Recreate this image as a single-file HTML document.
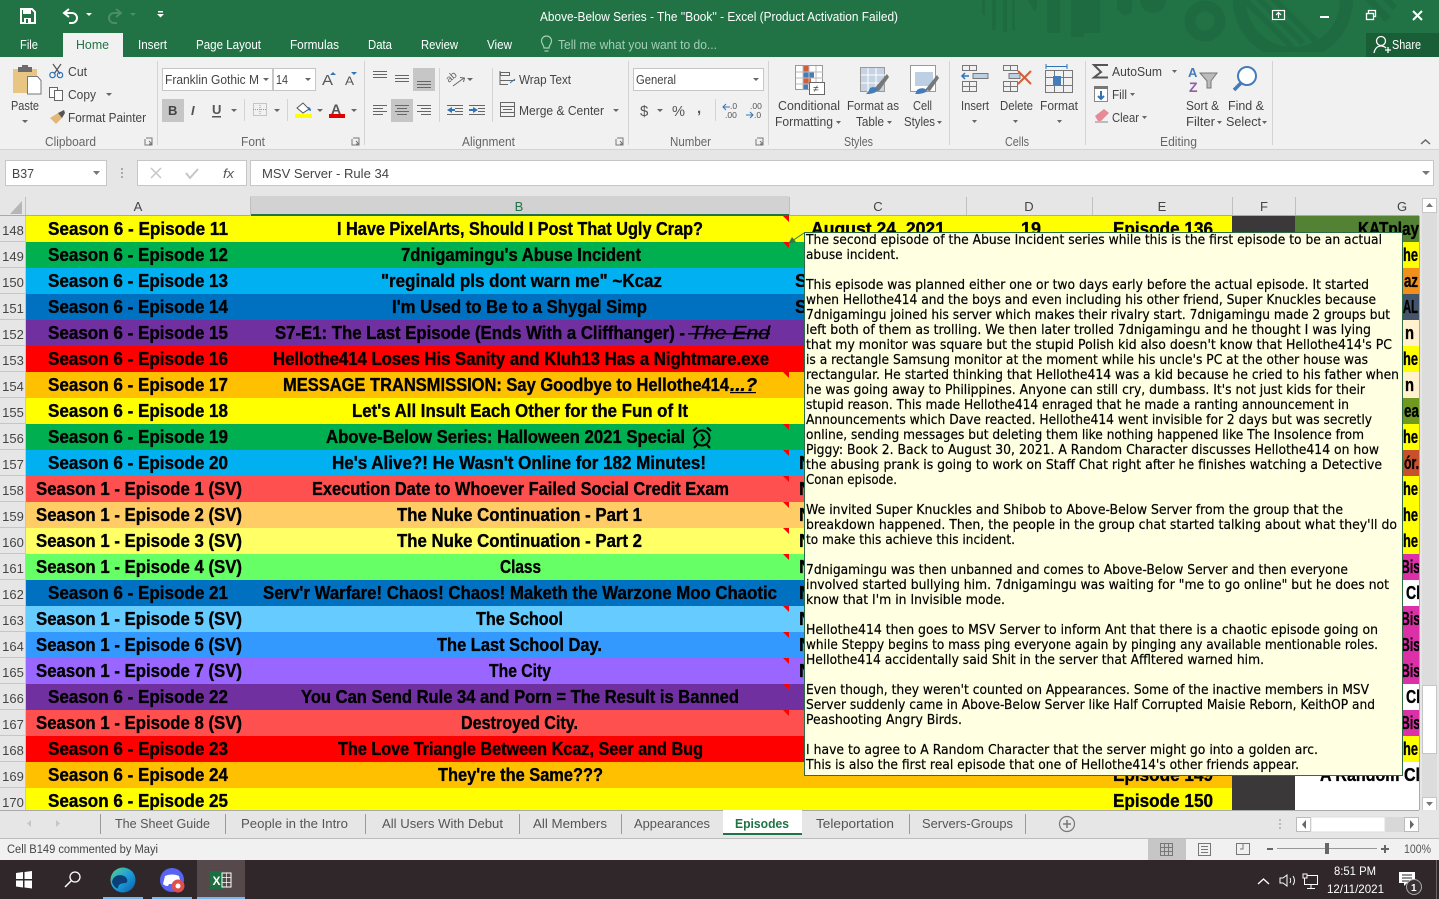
<!DOCTYPE html>
<html><head><meta charset="utf-8"><title>Above-Below Series - Excel</title>
<style>
html,body{margin:0;padding:0;background:#f1f1f1;overflow:hidden}
svg{display:block;position:absolute;left:0;top:0}
text{font-family:"Liberation Sans",sans-serif;white-space:pre}
.r{font-size:12.5px;fill:#444}
.g{font-size:12px;fill:#666}
.t{font-size:12.5px;fill:#fff}
.h{font-size:13px;fill:#444;text-anchor:middle}
.s{font-size:18px;font-weight:bold;fill:#000;stroke:#000;stroke-width:.35}
.c{font-family:"DejaVu Sans",sans-serif;font-size:13px;fill:#000;stroke:#000;stroke-width:.2}
.k{font-size:12.5px;fill:#666}
.w{fill:#fff;font-size:12.5px}
</style></head><body>
<svg width="1439" height="899" viewBox="0 0 1439 899" xmlns="http://www.w3.org/2000/svg">
<defs>
<clipPath id="grid"><rect x="26" y="216" width="1393" height="594"/></clipPath>
<clipPath id="tb"><rect x="0" y="0" width="1439" height="57"/></clipPath>
<clipPath id="ringc"><rect x="1220" y="0" width="150" height="52"/></clipPath>
<clipPath id="innerc"><circle cx="1293" cy="0" r="50"/></clipPath>
<linearGradient id="edge" x1="0" y1="0" x2="1" y2="1"><stop offset="0" stop-color="#5fd08a"/><stop offset=".5" stop-color="#1c9fd8"/><stop offset="1" stop-color="#0c5aa8"/></linearGradient>
</defs>

<!-- title bar -->
<rect width="1439" height="57" fill="#217346"/>
<g clip-path="url(#tb)" fill="#1f6b41">
<rect x="982" y="0" width="3" height="15"/><rect x="992" y="0" width="4" height="30"/><rect x="1003" y="0" width="4" height="32"/><rect x="1012" y="0" width="3" height="30"/>
<path d="M1028 0h9v8l-3 4z"/><rect x="1047" y="0" width="13" height="33"/><rect x="1071" y="0" width="13" height="37"/><rect x="1084" y="0" width="16" height="33"/><path d="M1117 0h15v12l-7 4-8-6z"/>
<circle cx="1153" cy="0" r="13"/>
<circle cx="1205" cy="21" r="15" fill="none" stroke="#1f6b41" stroke-width="11"/>
<g clip-path="url(#ringc)"><circle cx="1293" cy="0" r="53.500" fill="none" stroke="#1f6b41" stroke-width="13"/>
<g clip-path="url(#innerc)" stroke="#1f6b41" stroke-width="6" fill="none"><path d="M1240 -5l52 52M1255 -5l48 48M1270 -5l46 46"/></g></g>
<path d="M1365 0l20 22 6-5-16-17zM1383 0l10 10 4-4-6-6z"/>
</g>
<rect x="1366" y="33" width="73" height="24" fill="#1a5e38"/>
<text class="t" x="540" y="21" textLength="358" lengthAdjust="spacingAndGlyphs">Above-Below Series - The ''Book'' - Excel (Product Activation Failed)</text>

<!-- QAT -->
<g fill="none" stroke="#fff" stroke-width="2">
<path d="M21 9h11l3 3v11H21z"/></g>
<rect x="23" y="9" width="8" height="5" fill="#fff"/><rect x="24" y="18" width="7" height="5" fill="#fff"/><rect x="26" y="19" width="2" height="4" fill="#217346"/>
<path d="M65 13h7a5 5 0 0 1 0 10h-3M69 9l-5 4 5 4" fill="none" stroke="#fff" stroke-width="2"/>
<path d="M86 13h6l-3 3z" fill="#fff"/>
<path d="M120 13h-6a5 5 0 0 0 0 10h3M116 9l5 4-5 4" fill="none" stroke="#4c8d69" stroke-width="2"/>
<path d="M130 13h6l-3 3z" fill="#4c8d69"/>
<rect x="158" y="11" width="5" height="1.500" fill="#fff"/><path d="M157 14h7l-3.500 3.500z" fill="#fff"/>

<!-- window controls -->
<g fill="none" stroke="#fff" stroke-width="1.200"><rect x="1272.500" y="10.500" width="12" height="9"/><path d="M1278.500 18v-5M1276 15l2.500-2.500 2.500 2.500"/></g>
<rect x="1320" y="16" width="9" height="2" fill="#fff"/>
<g fill="none" stroke="#fff" stroke-width="1.300"><rect x="1366.500" y="13.500" width="7" height="6"/><path d="M1368.500 13v-2.500h7v6h-2"/></g>
<path d="M1413 11l9 9M1422 11l-9 9" stroke="#fff" stroke-width="2" fill="none"/>

<!-- tabs -->
<text class="w" x="20" y="49" textLength="18" lengthAdjust="spacingAndGlyphs">File</text>
<rect x="63" y="33" width="60" height="25" fill="#f1f1f1"/>
<text x="76" y="49" font-size="12.500" fill="#217346" textLength="33" lengthAdjust="spacingAndGlyphs">Home</text>
<text class="w" x="138" y="49" textLength="29" lengthAdjust="spacingAndGlyphs">Insert</text>
<text class="w" x="196" y="49" textLength="65" lengthAdjust="spacingAndGlyphs">Page Layout</text>
<text class="w" x="290" y="49" textLength="49" lengthAdjust="spacingAndGlyphs">Formulas</text>
<text class="w" x="368" y="49" textLength="24" lengthAdjust="spacingAndGlyphs">Data</text>
<text class="w" x="421" y="49" textLength="37" lengthAdjust="spacingAndGlyphs">Review</text>
<text class="w" x="487" y="49" textLength="25" lengthAdjust="spacingAndGlyphs">View</text>
<text x="558" y="49" font-size="12.500" fill="#a4cdb6" textLength="159" lengthAdjust="spacingAndGlyphs">Tell me what you want to do...</text>
<path d="M544 48c0-3-2.500-4-2.500-7a5 5 0 0 1 10 0c0 3-2.500 4-2.500 7zM544.500 51h4" fill="none" stroke="#a4cdb6" stroke-width="1.200"/>
<circle cx="1381" cy="41" r="4.500" fill="none" stroke="#fff" stroke-width="1.300"/><path d="M1374 53c1-5 4-7 7-7 2 0 4 1 5 2M1385 50h6M1388 47v6" fill="none" stroke="#fff" stroke-width="1.300"/>
<text class="w" x="1392" y="49" textLength="29" lengthAdjust="spacingAndGlyphs">Share</text>

<!-- ribbon -->
<rect y="57" width="1439" height="92" fill="#f1f1f1"/>
<rect y="149" width="1439" height="1" fill="#d4d4d4"/>
<g fill="#d4d4d4">
<rect x="157" y="61" width="1" height="84"/><rect x="364" y="61" width="1" height="84"/><rect x="628" y="61" width="1" height="84"/><rect x="768" y="61" width="1" height="84"/><rect x="949" y="61" width="1" height="84"/><rect x="1085" y="61" width="1" height="84"/><rect x="1272" y="61" width="1" height="84"/>
<rect x="244" y="99" width="1" height="22"/><rect x="287" y="99" width="1" height="22"/><rect x="439" y="68" width="1" height="54"/><rect x="492" y="68" width="1" height="54"/><rect x="715" y="99" width="1" height="22"/>
</g>
<!-- clipboard -->
<path d="M13 69h24v24H13z" fill="#e9c583"/><rect x="18" y="67" width="14" height="5" fill="#6b6b6b"/><rect x="22" y="65" width="6" height="3" fill="#6b6b6b"/>
<path d="M27.500 76.500h10l3.500 4v13.500H27.500z" fill="#fff" stroke="#777"/>
<text class="r" x="11" y="110" textLength="28" lengthAdjust="spacingAndGlyphs">Paste</text><path d="M22 120h6l-3 3z" fill="#666"/>
<g fill="none" stroke="#555" stroke-width="1.200"><path d="M53 64l7 10M61 64l-7 10"/></g><circle cx="52.500" cy="75" r="2.700" fill="none" stroke="#2f74b5" stroke-width="1.200"/><circle cx="60" cy="75" r="2.700" fill="none" stroke="#2f74b5" stroke-width="1.200"/>
<text class="r" x="68" y="76" textLength="19" lengthAdjust="spacingAndGlyphs">Cut</text>
<g fill="#fff" stroke="#666"><rect x="49.500" y="87.500" width="8" height="10"/><rect x="54.500" y="90.500" width="8" height="10"/></g>
<text class="r" x="68" y="99" textLength="28" lengthAdjust="spacingAndGlyphs">Copy</text><path d="M106 93h6l-3 3z" fill="#666"/>
<path d="M50 118l8-5 4 5-6 6z" fill="#e1b877"/><path d="M58 113l6-3 1 3-3 5z" fill="#555"/>
<text class="r" x="68" y="122" textLength="78" lengthAdjust="spacingAndGlyphs">Format Painter</text>
<text class="k" x="45" y="146" textLength="51" lengthAdjust="spacingAndGlyphs">Clipboard</text>
<path d="M146 138h6v7h-7v-6M149 141l3 3M149 144h3v-3" fill="none" stroke="#777"/>
<!-- font -->
<rect x="162.500" y="68.500" width="110" height="22" fill="#fff" stroke="#c6c6c6"/><rect x="273.500" y="68.500" width="42" height="22" fill="#fff" stroke="#c6c6c6"/>
<text x="165" y="84" font-size="12.500" fill="#444" textLength="94" lengthAdjust="spacingAndGlyphs">Franklin Gothic M</text><path d="M263 78h6l-3 3z" fill="#666"/>
<text x="276" y="84" font-size="12.500" fill="#444" textLength="12" lengthAdjust="spacingAndGlyphs">14</text><path d="M305 78h6l-3 3z" fill="#666"/>
<text x="322" y="85" font-size="15" fill="#555" textLength="11" lengthAdjust="spacingAndGlyphs">A</text><path d="M330 75l3-3 3 3z" fill="#2f74b5"/>
<text x="345" y="85" font-size="12" fill="#555" textLength="9" lengthAdjust="spacingAndGlyphs">A</text><path d="M351 72h6l-3 3z" fill="#2f74b5"/>
<rect x="162" y="99" width="22" height="23" fill="#c6c6c6"/>
<text x="168" y="115" font-size="13" font-weight="bold" fill="#444">B</text>
<text x="191" y="115" font-size="13" font-style="italic" font-weight="bold" fill="#555" font-family="Liberation Serif">I</text>
<text x="212" y="114" font-size="13" font-weight="bold" fill="#555">U</text><rect x="212" y="116" width="9" height="1.500" fill="#555"/>
<path d="M231 109h6l-3 3z" fill="#666"/>
<g fill="none" stroke="#999" stroke-dasharray="1 1"><rect x="253.500" y="103.500" width="13" height="12"/><path d="M253 109.500h14M260 103v12"/></g>
<path d="M274 109h6l-3 3z" fill="#666"/>
<path d="M297 108l6-5 6 6-6 4z" fill="#fff" stroke="#555"/><path d="M308 107c2 0 3 2 3 4l-3-1z" fill="#2f74b5"/><rect x="295" y="114" width="17" height="4" fill="#ff0"/>
<path d="M317 109h6l-3 3z" fill="#666"/>
<text x="331" y="114" font-size="14" fill="#555" font-weight="bold">A</text><rect x="329" y="114" width="16" height="4" fill="#e00000"/>
<path d="M351 109h6l-3 3z" fill="#666"/>
<text class="k" x="241" y="146" textLength="24" lengthAdjust="spacingAndGlyphs">Font</text>
<path d="M353 138h6v7h-7v-6M356 141l3 3M356 144h3v-3" fill="none" stroke="#777"/>
<!-- alignment -->
<rect x="413" y="68" width="22" height="23" fill="#c6c6c6"/><rect x="391" y="99" width="22" height="23" fill="#c6c6c6"/>
<g stroke="#666" fill="none">
<path d="M373 71.500h14M373 74.500h14M373 77.500h14"/>
<path d="M395 75.500h14M395 78.500h14M395 81.500h14"/>
<path d="M417 81.500h14M417 84.500h14M417 87.500h14"/>
<path d="M373 105.500h14M373 108.500h10M373 111.500h14M373 114.500h10"/>
<path d="M395 105.500h14M397 108.500h10M395 111.500h14M397 114.500h10"/>
<path d="M417 105.500h14M421 108.500h10M417 111.500h14M421 114.500h10"/>
<path d="M453 86l11-8M460 77.500l4.500.5-1 4"/>
<path d="M447 105.500h16M455 108.500h8M455 111.500h8M447 114.500h16"/>
<path d="M469 105.500h16M478 108.500h7M478 111.500h7M469 114.500h16"/>
</g>
<text x="449" y="83" font-size="10" fill="#666" transform="rotate(-40 449 83)">ab</text>
<path d="M467 78h6l-3 3z" fill="#666"/>
<path d="M447 110l5-3v6z" fill="#2f74b5"/><rect x="451" y="109" width="4" height="2" fill="#2f74b5"/>
<path d="M478 110l-5-3v6z" fill="#2f74b5"/><rect x="469" y="109" width="5" height="2" fill="#2f74b5"/>
<g stroke="#666" fill="none">
<rect x="500.500" y="72.500" width="9" height="3"/><path d="M500 80.500h15M500 84.500h8M500 71v14"/>
<rect x="500.500" y="102.500" width="14" height="14"/><path d="M500 106.500h15M500 112.500h15M503 109.500h9"/></g>
<path d="M510 83l5-4" stroke="#2f74b5" fill="none"/>
<text class="r" x="519" y="84" textLength="52" lengthAdjust="spacingAndGlyphs">Wrap Text</text>
<text class="r" x="519" y="115" textLength="85" lengthAdjust="spacingAndGlyphs">Merge &amp; Center</text><path d="M613 109h6l-3 3z" fill="#666"/>
<text class="k" x="462" y="146" textLength="53" lengthAdjust="spacingAndGlyphs">Alignment</text>
<path d="M617 138h6v7h-7v-6M620 141l3 3M620 144h3v-3" fill="none" stroke="#777"/>
<!-- number -->
<rect x="633.500" y="68.500" width="130" height="22" fill="#fff" stroke="#c6c6c6"/>
<text x="636" y="84" font-size="12.500" fill="#444" textLength="40" lengthAdjust="spacingAndGlyphs">General</text><path d="M753 78h6l-3 3z" fill="#666"/>
<text x="640" y="116" font-size="15" fill="#555">$</text><path d="M657 109h6l-3 3z" fill="#666"/>
<text x="672" y="116" font-size="15" fill="#555" textLength="13" lengthAdjust="spacingAndGlyphs">%</text>
<text x="697" y="113" font-size="15" font-weight="bold" fill="#555">,</text>
<text x="730" y="109" font-size="8.500" fill="#555">.0</text><text x="725" y="118" font-size="8.500" fill="#555">.00</text>
<path d="M723 107h7M726 104l-3 3 3 3" stroke="#2f74b5" fill="none"/>
<text x="750" y="109" font-size="8.500" fill="#555">.00</text><text x="754" y="118" font-size="8.500" fill="#555">.0</text>
<path d="M746 115h7M750 112l3 3-3 3" stroke="#2f74b5" fill="none"/>
<text class="k" x="670" y="146" textLength="41" lengthAdjust="spacingAndGlyphs">Number</text>
<path d="M757 138h6v7h-7v-6M760 141l3 3M760 144h3v-3" fill="none" stroke="#777"/>
<!-- styles -->
<g fill="#fff" stroke="#999"><rect x="795.500" y="65.500" width="27" height="24"/></g>
<rect x="803" y="66" width="6" height="6" fill="#d15f3c"/><rect x="803" y="72" width="11" height="6" fill="#447cb8"/><rect x="803" y="78" width="8" height="6" fill="#d15f3c"/><rect x="803" y="84" width="5" height="5" fill="#447cb8"/>
<path d="M796 72h27M796 78h27M796 84h27M803 66v24M809 66v24M816 66v24" stroke="#bbb" fill="none"/>
<rect x="809.500" y="82.500" width="15" height="12" fill="#fff" stroke="#666"/><text x="813" y="92" font-size="10" fill="#444">≠</text>
<text class="r" x="778" y="110" textLength="62" lengthAdjust="spacingAndGlyphs">Conditional</text>
<text class="r" x="775" y="126" textLength="58" lengthAdjust="spacingAndGlyphs">Formatting</text><path d="M836 121h5l-2.500 3z" fill="#666"/>
<rect x="860.500" y="67.500" width="24" height="24" fill="#c6d3e3" stroke="#999"/><path d="M861 75h24M861 83h24M868 68v24M876 68v24" stroke="#fff"/>
<path d="M873 90l14-16 2 3-10 14z" fill="#777"/><path d="M870 88c4-2 7 0 8 2-3 4-9 4-12 4 2-2 3-3 4-6z" fill="#447cb8"/>
<text class="r" x="847" y="110" textLength="52" lengthAdjust="spacingAndGlyphs">Format as</text>
<text class="r" x="856" y="126" textLength="28" lengthAdjust="spacingAndGlyphs">Table</text><path d="M887 121h5l-2.500 3z" fill="#666"/>
<rect x="910.500" y="65.500" width="25" height="26" fill="#fff" stroke="#999"/><rect x="915" y="72" width="18" height="14" fill="#bccfe3"/>
<path d="M925 90l12-15 2 3-9 13z" fill="#777"/><path d="M917 90c4-3 9-2 10 1-3 3-9 3-12 3 1-1 1-2 2-4z" fill="#447cb8"/>
<text class="r" x="913" y="110" textLength="19" lengthAdjust="spacingAndGlyphs">Cell</text>
<text class="r" x="904" y="126" textLength="31" lengthAdjust="spacingAndGlyphs">Styles</text><path d="M937 121h5l-2.500 3z" fill="#666"/>
<text class="k" x="844" y="146" textLength="29" lengthAdjust="spacingAndGlyphs">Styles</text>
<!-- cells -->
<g fill="none" stroke="#777">
<path d="M962.500 65.500h14v5h-14zM969.500 65v5"/><path d="M962.500 81.500h14v10h-14zM962.500 86.500h14M969.500 82v9"/>
<path d="M1003.500 65.500h14v5h-14zM1010.500 65v5"/><path d="M1003.500 81.500h14v10h-14zM1003.500 86.500h14M1010.500 82v9"/>
<rect x="1045.500" y="70.500" width="27" height="22"/><path d="M1045 77.500h28M1045 85.500h28M1054.500 71v22M1063.500 71v22"/>
</g>
<rect x="973" y="73.500" width="15" height="5" fill="#bccfe3" stroke="#777"/><path d="M962 76h7M965 73l-3 3 3 3" stroke="#2f74b5" fill="none" stroke-width="1.500"/>
<rect x="1009" y="73.500" width="11" height="5" fill="#bccfe3" stroke="#777"/><path d="M1018 71l13 13M1031 71l-13 13" stroke="#d15f3c" stroke-width="2" fill="none"/>
<rect x="1053" y="76" width="8" height="9" fill="#447cb8"/><path d="M1046 66.500h21M1046 64v5M1067 64v5" stroke="#2f74b5" fill="none"/>
<text class="r" x="961" y="110" textLength="28" lengthAdjust="spacingAndGlyphs">Insert</text><path d="M972 120h5l-2.500 3z" fill="#666"/>
<text class="r" x="1000" y="110" textLength="33" lengthAdjust="spacingAndGlyphs">Delete</text><path d="M1013 120h5l-2.500 3z" fill="#666"/>
<text class="r" x="1040" y="110" textLength="38" lengthAdjust="spacingAndGlyphs">Format</text><path d="M1057 120h5l-2.500 3z" fill="#666"/>
<text class="k" x="1005" y="146" textLength="24" lengthAdjust="spacingAndGlyphs">Cells</text>
<!-- editing -->
<path d="M1108 65h-14l7 7-7 5.500h14" fill="none" stroke="#555" stroke-width="2"/>
<text class="r" x="1112" y="76" textLength="50" lengthAdjust="spacingAndGlyphs">AutoSum</text><path d="M1172 70h5l-2.500 3z" fill="#666"/>
<rect x="1094.500" y="87.500" width="13" height="14" fill="#fff" stroke="#888"/><rect x="1094" y="86" width="14" height="3" fill="#777"/><path d="M1101 91v8M1098 96l3 3 3-3" stroke="#2f74b5" stroke-width="2" fill="none"/>
<text class="r" x="1112" y="99" textLength="15" lengthAdjust="spacingAndGlyphs">Fill</text><path d="M1130 93h5l-2.500 3z" fill="#666"/>
<path d="M1095 116l9-7 5 4-8 8h-3z" fill="#e78a97"/><path d="M1095 122h13" stroke="#888" fill="none"/>
<text class="r" x="1112" y="122" textLength="27" lengthAdjust="spacingAndGlyphs">Clear</text><path d="M1142 116h5l-2.500 3z" fill="#666"/>
<text x="1188" y="77" font-size="13" font-weight="bold" fill="#447cb8">A</text><text x="1189" y="92" font-size="14" font-weight="bold" fill="#8e5ea8">Z</text>
<path d="M1200 73h17l-6 8v7h-4v-7z" fill="#bbb" stroke="#777"/>
<circle cx="1247" cy="76" r="9" fill="#fff" stroke="#447cb8" stroke-width="2"/><path d="M1241 83l-7 7" stroke="#447cb8" stroke-width="3.500" fill="none"/>
<text class="r" x="1186" y="110" textLength="33" lengthAdjust="spacingAndGlyphs">Sort &amp;</text>
<text class="r" x="1186" y="126" textLength="29" lengthAdjust="spacingAndGlyphs">Filter</text><path d="M1217 121h5l-2.500 3z" fill="#666"/>
<text class="r" x="1228" y="110" textLength="36" lengthAdjust="spacingAndGlyphs">Find &amp;</text>
<text class="r" x="1226" y="126" textLength="35" lengthAdjust="spacingAndGlyphs">Select</text><path d="M1262 121h5l-2.500 3z" fill="#666"/>
<text class="k" x="1160" y="146" textLength="37" lengthAdjust="spacingAndGlyphs">Editing</text>
<path d="M1421 144l4.500-4 4.500 4" stroke="#666" stroke-width="1.500" fill="none"/>

<!-- formula bar -->
<rect y="150" width="1439" height="660" fill="#e6e6e6"/>
<rect x="5.500" y="160.500" width="101" height="25" fill="#fff" stroke="#c6c6c6"/>
<text x="12" y="178" font-size="13" fill="#444" textLength="22" lengthAdjust="spacingAndGlyphs">B37</text><path d="M93 171h7l-3.500 4z" fill="#777"/>
<g fill="#aaa"><rect x="121" y="168" width="2" height="2"/><rect x="121" y="172" width="2" height="2"/><rect x="121" y="176" width="2" height="2"/></g>
<rect x="137.500" y="160.500" width="109" height="25" fill="#fff" stroke="#c6c6c6"/>
<path d="M151 168l10 10M161 168l-10 10" stroke="#c6c6c6" stroke-width="1.500" fill="none"/>
<path d="M186 173l4 5 8-9" stroke="#c6c6c6" stroke-width="2" fill="none"/>
<text x="223" y="178" font-size="13" font-style="italic" fill="#555" font-family="Liberation Serif" textLength="11" lengthAdjust="spacingAndGlyphs">fx</text>
<rect x="250.500" y="160.500" width="1183" height="25" fill="#fff" stroke="#c6c6c6"/>
<text x="262" y="178" font-size="13" fill="#444" textLength="127" lengthAdjust="spacingAndGlyphs">MSV Server - Rule 34</text>
<path d="M1422 171h8l-4 4z" fill="#777"/>

<!-- headers -->
<rect x="0" y="196" width="1419" height="20" fill="#e6e6e6"/>
<path d="M10 214h12v-13z" fill="#b6b6b6"/>
<rect x="250" y="196" width="539" height="18" fill="#d2d2d2"/><rect x="250" y="214" width="539" height="2" fill="#217346"/>
<g fill="#c0c0c0"><rect x="25" y="197" width="1" height="19"/><rect x="250" y="197" width="1" height="19"/><rect x="789" y="197" width="1" height="19"/><rect x="966" y="197" width="1" height="19"/><rect x="1092" y="197" width="1" height="19"/><rect x="1232" y="197" width="1" height="19"/><rect x="1295" y="197" width="1" height="19"/></g>
<rect x="0" y="215" width="250" height="1" fill="#aaa"/><rect x="789" y="215" width="630" height="1" fill="#aaa"/>
<text class="h" x="138" y="211">A</text><text class="h" x="519" y="211" style="fill:#217346">B</text><text class="h" x="878" y="211">C</text><text class="h" x="1029" y="211">D</text><text class="h" x="1162" y="211">E</text><text class="h" x="1264" y="211">F</text><text class="h" x="1402" y="211">G</text>

<!-- row labels -->
<g fill="#c6c6c6"><rect y="241" width="25" height="1"/><rect y="267" width="25" height="1"/><rect y="293" width="25" height="1"/><rect y="319" width="25" height="1"/><rect y="345" width="25" height="1"/><rect y="371" width="25" height="1"/><rect y="397" width="25" height="1"/><rect y="423" width="25" height="1"/><rect y="449" width="25" height="1"/><rect y="475" width="25" height="1"/><rect y="501" width="25" height="1"/><rect y="527" width="25" height="1"/><rect y="553" width="25" height="1"/><rect y="579" width="25" height="1"/><rect y="605" width="25" height="1"/><rect y="631" width="25" height="1"/><rect y="657" width="25" height="1"/><rect y="683" width="25" height="1"/><rect y="709" width="25" height="1"/><rect y="735" width="25" height="1"/><rect y="761" width="25" height="1"/><rect y="787" width="25" height="1"/><rect x="25" y="216" width="1" height="594"/></g>
<g font-size="13">
<text class="h" x="13" y="235">148</text><text class="h" x="13" y="261">149</text><text class="h" x="13" y="287">150</text><text class="h" x="13" y="313">151</text><text class="h" x="13" y="339">152</text><text class="h" x="13" y="365">153</text><text class="h" x="13" y="391">154</text><text class="h" x="13" y="417">155</text><text class="h" x="13" y="443">156</text><text class="h" x="13" y="469">157</text><text class="h" x="13" y="495">158</text><text class="h" x="13" y="521">159</text><text class="h" x="13" y="547">160</text><text class="h" x="13" y="573">161</text><text class="h" x="13" y="599">162</text><text class="h" x="13" y="625">163</text><text class="h" x="13" y="651">164</text><text class="h" x="13" y="677">165</text><text class="h" x="13" y="703">166</text><text class="h" x="13" y="729">167</text><text class="h" x="13" y="755">168</text><text class="h" x="13" y="781">169</text><text class="h" x="13" y="807">170</text>
</g>

<!-- grid -->
<g clip-path="url(#grid)">
<rect x="26" y="216" width="1206" height="26" fill="#ffff00"/>
<rect x="26" y="242" width="1206" height="26" fill="#00b050"/>
<rect x="26" y="268" width="1206" height="26" fill="#00b0f0"/>
<rect x="26" y="294" width="1206" height="26" fill="#0070c0"/>
<rect x="26" y="320" width="1206" height="26" fill="#7030a0"/>
<rect x="26" y="346" width="1206" height="26" fill="#ff0000"/>
<rect x="26" y="372" width="1206" height="26" fill="#ffc000"/>
<rect x="26" y="398" width="1206" height="26" fill="#ffff00"/>
<rect x="26" y="424" width="1206" height="26" fill="#00b050"/>
<rect x="26" y="450" width="1206" height="26" fill="#00b0f0"/>
<rect x="26" y="476" width="1206" height="26" fill="#ff5050"/>
<rect x="26" y="502" width="1206" height="26" fill="#ffcc66"/>
<rect x="26" y="528" width="1206" height="26" fill="#ffff66"/>
<rect x="26" y="554" width="1206" height="26" fill="#66ff66"/>
<rect x="26" y="580" width="1206" height="26" fill="#0070c0"/>
<rect x="26" y="606" width="1206" height="26" fill="#66ccff"/>
<rect x="26" y="632" width="1206" height="26" fill="#3399ff"/>
<rect x="26" y="658" width="1206" height="26" fill="#9966ff"/>
<rect x="26" y="684" width="1206" height="26" fill="#7030a0"/>
<rect x="26" y="710" width="1206" height="26" fill="#ff5050"/>
<rect x="26" y="736" width="1206" height="26" fill="#ff0000"/>
<rect x="26" y="762" width="1206" height="26" fill="#ffc000"/>
<rect x="26" y="788" width="1206" height="26" fill="#ffff00"/>
<rect x="1232" y="216" width="63" height="598" fill="#3a3838"/>
<rect x="1295" y="216" width="124" height="26" fill="#548235"/>
<rect x="1295" y="242" width="124" height="26" fill="#ffff00"/>
<rect x="1295" y="268" width="124" height="26" fill="#f18f1d"/>
<rect x="1295" y="294" width="124" height="26" fill="#44546a"/>
<rect x="1295" y="320" width="124" height="26" fill="#fff2cc"/>
<rect x="1295" y="346" width="124" height="26" fill="#ffff00"/>
<rect x="1295" y="372" width="124" height="26" fill="#fff2cc"/>
<rect x="1295" y="398" width="124" height="26" fill="#6f9a1f"/>
<rect x="1295" y="424" width="124" height="26" fill="#ffff00"/>
<rect x="1295" y="450" width="124" height="26" fill="#c9502d"/>
<rect x="1295" y="476" width="124" height="78" fill="#ffff00"/>
<rect x="1295" y="554" width="124" height="26" fill="#dc30a8"/>
<rect x="1295" y="580" width="124" height="26" fill="#ffffff"/>
<rect x="1295" y="606" width="124" height="78" fill="#dc30a8"/>
<rect x="1295" y="684" width="124" height="26" fill="#ffffff"/>
<rect x="1295" y="710" width="124" height="26" fill="#dc30a8"/>
<rect x="1295" y="736" width="124" height="26" fill="#ffff00"/>
<rect x="1295" y="762" width="124" height="48" fill="#ffffff"/>

<!-- col A -->
<text class="s" x="48" y="235" textLength="180" lengthAdjust="spacingAndGlyphs">Season 6 - Episode 11</text>
<text class="s" x="48" y="261" textLength="180" lengthAdjust="spacingAndGlyphs">Season 6 - Episode 12</text>
<text class="s" x="48" y="287" textLength="180" lengthAdjust="spacingAndGlyphs">Season 6 - Episode 13</text>
<text class="s" x="48" y="313" textLength="180" lengthAdjust="spacingAndGlyphs">Season 6 - Episode 14</text>
<text class="s" x="48" y="339" textLength="180" lengthAdjust="spacingAndGlyphs">Season 6 - Episode 15</text>
<text class="s" x="48" y="365" textLength="180" lengthAdjust="spacingAndGlyphs">Season 6 - Episode 16</text>
<text class="s" x="48" y="391" textLength="180" lengthAdjust="spacingAndGlyphs">Season 6 - Episode 17</text>
<text class="s" x="48" y="417" textLength="180" lengthAdjust="spacingAndGlyphs">Season 6 - Episode 18</text>
<text class="s" x="48" y="443" textLength="180" lengthAdjust="spacingAndGlyphs">Season 6 - Episode 19</text>
<text class="s" x="48" y="469" textLength="180" lengthAdjust="spacingAndGlyphs">Season 6 - Episode 20</text>
<text class="s" x="36" y="495" textLength="206" lengthAdjust="spacingAndGlyphs">Season 1 - Episode 1 (SV)</text>
<text class="s" x="36" y="521" textLength="206" lengthAdjust="spacingAndGlyphs">Season 1 - Episode 2 (SV)</text>
<text class="s" x="36" y="547" textLength="206" lengthAdjust="spacingAndGlyphs">Season 1 - Episode 3 (SV)</text>
<text class="s" x="36" y="573" textLength="206" lengthAdjust="spacingAndGlyphs">Season 1 - Episode 4 (SV)</text>
<text class="s" x="48" y="599" textLength="180" lengthAdjust="spacingAndGlyphs">Season 6 - Episode 21</text>
<text class="s" x="36" y="625" textLength="206" lengthAdjust="spacingAndGlyphs">Season 1 - Episode 5 (SV)</text>
<text class="s" x="36" y="651" textLength="206" lengthAdjust="spacingAndGlyphs">Season 1 - Episode 6 (SV)</text>
<text class="s" x="36" y="677" textLength="206" lengthAdjust="spacingAndGlyphs">Season 1 - Episode 7 (SV)</text>
<text class="s" x="48" y="703" textLength="180" lengthAdjust="spacingAndGlyphs">Season 6 - Episode 22</text>
<text class="s" x="36" y="729" textLength="206" lengthAdjust="spacingAndGlyphs">Season 1 - Episode 8 (SV)</text>
<text class="s" x="48" y="755" textLength="180" lengthAdjust="spacingAndGlyphs">Season 6 - Episode 23</text>
<text class="s" x="48" y="781" textLength="180" lengthAdjust="spacingAndGlyphs">Season 6 - Episode 24</text>
<text class="s" x="48" y="807" textLength="180" lengthAdjust="spacingAndGlyphs">Season 6 - Episode 25</text>

<!-- col B -->
<text class="s" x="337" y="235" textLength="366" lengthAdjust="spacingAndGlyphs">I Have PixelArts, Should I Post That Ugly Crap?</text>
<text class="s" x="401" y="261" textLength="240" lengthAdjust="spacingAndGlyphs">7dnigamingu's Abuse Incident</text>
<text class="s" x="381" y="287" textLength="281" lengthAdjust="spacingAndGlyphs">"reginald pls dont warn me" ~Kcaz</text>
<text class="s" x="392" y="313" textLength="255" lengthAdjust="spacingAndGlyphs">I'm Used to Be to a Shygal Simp</text>
<text class="s" x="275" y="339" textLength="410" lengthAdjust="spacingAndGlyphs">S7-E1: The Last Episode (Ends With a Cliffhanger) -</text>
<text x="690" y="339" font-size="18" fill="#000" stroke="#000" stroke-width=".3" textLength="80" lengthAdjust="spacingAndGlyphs" font-style="italic">The End</text><rect x="688" y="333" width="82" height="1.500" fill="#000"/>
<text class="s" x="273" y="365" textLength="496" lengthAdjust="spacingAndGlyphs">Hellothe414 Loses His Sanity and Kluh13 Has a Nightmare.exe</text>
<text class="s" x="283" y="391" textLength="446" lengthAdjust="spacingAndGlyphs">MESSAGE TRANSMISSION: Say Goodbye to Hellothe414</text>
<text class="s" x="730" y="391" textLength="27" lengthAdjust="spacingAndGlyphs" font-style="italic">...?</text><rect x="730" y="392" width="26" height="1.200" fill="#000"/>
<text class="s" x="352" y="417" textLength="336" lengthAdjust="spacingAndGlyphs">Let's All Insult Each Other for the Fun of It</text>
<text class="s" x="326" y="443" textLength="359" lengthAdjust="spacingAndGlyphs">Above-Below Series: Halloween 2021 Special</text>
<circle cx="702" cy="438" r="7.500" fill="none" stroke="#000" stroke-width="2"/><path d="M693 431l4-3.500M711 431l-4-3.500M697 445l-3 3M707 445l3 3M701 434l3 4-3 3" stroke="#000" stroke-width="2" fill="none"/>
<text class="s" x="332" y="469" textLength="374" lengthAdjust="spacingAndGlyphs">He's Alive?! He Wasn't Online for 182 Minutes!</text>
<text class="s" x="312" y="495" textLength="417" lengthAdjust="spacingAndGlyphs">Execution Date to Whoever Failed Social Credit Exam</text>
<text class="s" x="397" y="521" textLength="245" lengthAdjust="spacingAndGlyphs">The Nuke Continuation - Part 1</text>
<text class="s" x="397" y="547" textLength="245" lengthAdjust="spacingAndGlyphs">The Nuke Continuation - Part 2</text>
<text class="s" x="500" y="573" textLength="41" lengthAdjust="spacingAndGlyphs">Class</text>
<text class="s" x="263" y="599" textLength="514" lengthAdjust="spacingAndGlyphs">Serv'r Warfare! Chaos! Chaos! Maketh the Warzone Moo Chaotic</text>
<text class="s" x="476" y="625" textLength="87" lengthAdjust="spacingAndGlyphs">The School</text>
<text class="s" x="437" y="651" textLength="165" lengthAdjust="spacingAndGlyphs">The Last School Day.</text>
<text class="s" x="489" y="677" textLength="62" lengthAdjust="spacingAndGlyphs">The City</text>
<text class="s" x="301" y="703" textLength="438" lengthAdjust="spacingAndGlyphs">You Can Send Rule 34 and Porn = The Result is Banned</text>
<text class="s" x="461" y="729" textLength="117" lengthAdjust="spacingAndGlyphs">Destroyed City.</text>
<text class="s" x="338" y="755" textLength="365" lengthAdjust="spacingAndGlyphs">The Love Triangle Between Kcaz, Seer and Bug</text>
<text class="s" x="438" y="781" textLength="165" lengthAdjust="spacingAndGlyphs">They're the Same???</text>

<!-- indicators -->
<g fill="#ff0000">
<path d="M783 216h6v6z"/><path d="M783 242h6v6z"/><path d="M783 372h6v6z"/><path d="M783 424h6v6z"/><path d="M783 450h6v6z"/><path d="M783 476h6v6z"/><path d="M783 502h6v6z"/><path d="M783 528h6v6z"/><path d="M783 554h6v6z"/><path d="M783 606h6v6z"/><path d="M783 632h6v6z"/><path d="M783 658h6v6z"/><path d="M783 684h6v6z"/><path d="M783 710h6v6z"/>
</g>

<!-- cols C..G -->
<text class="s" x="811" y="235" textLength="134" lengthAdjust="spacingAndGlyphs">August 24, 2021</text>
<text class="s" x="1021" y="235" textLength="20" lengthAdjust="spacingAndGlyphs">19</text>
<text class="s" x="1113" y="235" textLength="100" lengthAdjust="spacingAndGlyphs">Episode 136</text>
<text class="s" x="1113" y="781" textLength="100" lengthAdjust="spacingAndGlyphs">Episode 149</text>
<text class="s" x="1113" y="807" textLength="100" lengthAdjust="spacingAndGlyphs">Episode 150</text>
<text class="s" x="795" y="287" textLength="9">S</text><text class="s" x="795" y="313" textLength="9">S</text>
<text class="s" x="799" y="469">N</text><text class="s" x="799" y="495">N</text><text class="s" x="799" y="521">N</text><text class="s" x="799" y="547">N</text><text class="s" x="799" y="573">N</text><text class="s" x="799" y="599">N</text><text class="s" x="799" y="625">N</text><text class="s" x="799" y="651">N</text><text class="s" x="799" y="677">N</text>
<text class="s" x="1358" y="235" textLength="61" lengthAdjust="spacingAndGlyphs">KATplay</text>
<text class="s" x="1403" y="261" textLength="15" lengthAdjust="spacingAndGlyphs">he</text>
<text class="s" x="1404" y="287" textLength="14" lengthAdjust="spacingAndGlyphs">az</text>
<text class="s" x="1403" y="313" textLength="15" lengthAdjust="spacingAndGlyphs">AL</text>
<text class="s" x="1405" y="339" textLength="9" lengthAdjust="spacingAndGlyphs">n</text>
<text class="s" x="1403" y="365" textLength="15" lengthAdjust="spacingAndGlyphs">he</text>
<text class="s" x="1405" y="391" textLength="9" lengthAdjust="spacingAndGlyphs">n</text>
<text class="s" x="1404" y="417" textLength="15" lengthAdjust="spacingAndGlyphs">ea</text>
<text class="s" x="1403" y="443" textLength="15" lengthAdjust="spacingAndGlyphs">he</text>
<text class="s" x="1404" y="469" textLength="15" lengthAdjust="spacingAndGlyphs">ór.</text>
<text class="s" x="1403" y="495" textLength="15" lengthAdjust="spacingAndGlyphs">he</text>
<text class="s" x="1403" y="521" textLength="15" lengthAdjust="spacingAndGlyphs">he</text>
<text class="s" x="1403" y="547" textLength="15" lengthAdjust="spacingAndGlyphs">he</text>
<text class="s" x="1401" y="573" textLength="19" lengthAdjust="spacingAndGlyphs">Bis</text>
<text class="s" x="1406" y="599" textLength="14" lengthAdjust="spacingAndGlyphs">Cl</text>
<text class="s" x="1401" y="625" textLength="19" lengthAdjust="spacingAndGlyphs">Bis</text>
<text class="s" x="1401" y="651" textLength="19" lengthAdjust="spacingAndGlyphs">Bis</text>
<text class="s" x="1401" y="677" textLength="19" lengthAdjust="spacingAndGlyphs">Bis</text>
<text class="s" x="1406" y="703" textLength="14" lengthAdjust="spacingAndGlyphs">Cl</text>
<text class="s" x="1401" y="729" textLength="19" lengthAdjust="spacingAndGlyphs">Bis</text>
<text class="s" x="1403" y="755" textLength="15" lengthAdjust="spacingAndGlyphs">he</text>
<text class="s" x="1320" y="781" textLength="100" lengthAdjust="spacingAndGlyphs">A Random Cl</text>
</g>
<rect x="1419" y="216" width="1" height="594" fill="#aaa"/>

<!-- comment -->
<path d="M789 243l15-10" stroke="#2f7d45" fill="none"/><path d="M788 244l8-2-4-5z" fill="#2f7d45"/>
<rect x="804.500" y="232.500" width="598" height="543" fill="#ffffe1" stroke="#2f6b46"/>
<text class="c" x="806" y="244" textLength="576" lengthAdjust="spacingAndGlyphs">The second episode of the Abuse Incident series while this is the first episode to be an actual</text>
<text class="c" x="806" y="259" textLength="93" lengthAdjust="spacingAndGlyphs">abuse incident.</text>
<text class="c" x="806" y="289" textLength="563" lengthAdjust="spacingAndGlyphs">This episode was planned either one or two days early before the actual episode. It started</text>
<text class="c" x="806" y="304" textLength="570" lengthAdjust="spacingAndGlyphs">when Hellothe414 and the boys and even including his other friend, Super Knuckles because</text>
<text class="c" x="806" y="319" textLength="584" lengthAdjust="spacingAndGlyphs">7dnigamingu joined his server which makes their rivalry start. 7dnigamingu made 2 groups but</text>
<text class="c" x="806" y="334" textLength="565" lengthAdjust="spacingAndGlyphs">left both of them as trolling. We then later trolled 7dnigamingu and he thought I was lying</text>
<text class="c" x="806" y="349" textLength="586" lengthAdjust="spacingAndGlyphs">that my monitor was square but the stupid Polish kid also doesn't know that Hellothe414's PC</text>
<text class="c" x="806" y="364" textLength="562" lengthAdjust="spacingAndGlyphs">is a rectangle Samsung monitor at the moment while his uncle's PC at the other house was</text>
<text class="c" x="806" y="379" textLength="593" lengthAdjust="spacingAndGlyphs">rectangular. He started thinking that Hellothe414 was a kid because he cried to his father when</text>
<text class="c" x="806" y="394" textLength="559" lengthAdjust="spacingAndGlyphs">he was going away to Philippines. Anyone can still cry, dumbass. It's not just kids for their</text>
<text class="c" x="806" y="409" textLength="543" lengthAdjust="spacingAndGlyphs">stupid reason. This made Hellothe414 enraged that he made a ranting announcement in</text>
<text class="c" x="806" y="424" textLength="566" lengthAdjust="spacingAndGlyphs">Announcements which Dave reacted. Hellothe414 went invisible for 2 days but was secretly</text>
<text class="c" x="806" y="439" textLength="558" lengthAdjust="spacingAndGlyphs">online, sending messages but deleting them like nothing happened like The Insolence from</text>
<text class="c" x="806" y="454" textLength="573" lengthAdjust="spacingAndGlyphs">Piggy: Book 2. Back to August 30, 2021. A Random Character discusses Hellothe414 on how</text>
<text class="c" x="806" y="469" textLength="576" lengthAdjust="spacingAndGlyphs">the abusing prank is going to work on Staff Chat right after he finishes watching a Detective</text>
<text class="c" x="806" y="484" textLength="91" lengthAdjust="spacingAndGlyphs">Conan episode.</text>
<text class="c" x="806" y="514" textLength="537" lengthAdjust="spacingAndGlyphs">We invited Super Knuckles and Shibob to Above-Below Server from the group that the</text>
<text class="c" x="806" y="529" textLength="591" lengthAdjust="spacingAndGlyphs">breakdown happened. Then, the people in the group chat started talking about what they'll do</text>
<text class="c" x="806" y="544" textLength="209" lengthAdjust="spacingAndGlyphs">to make this achieve this incident.</text>
<text class="c" x="806" y="574" textLength="542" lengthAdjust="spacingAndGlyphs">7dnigamingu was then unbanned and comes to Above-Below Server and then everyone</text>
<text class="c" x="806" y="589" textLength="583" lengthAdjust="spacingAndGlyphs">involved started bullying him. 7dnigamingu was waiting for "me to go online" but he does not</text>
<text class="c" x="806" y="604" textLength="199" lengthAdjust="spacingAndGlyphs">know that I'm in Invisible mode.</text>
<text class="c" x="806" y="634" textLength="572" lengthAdjust="spacingAndGlyphs">Hellothe414 then goes to MSV Server to inform Ant that there is a chaotic episode going on</text>
<text class="c" x="806" y="649" textLength="572" lengthAdjust="spacingAndGlyphs">while Steppy begins to mass ping everyone again by pinging any available mentionable roles.</text>
<text class="c" x="806" y="664" textLength="458" lengthAdjust="spacingAndGlyphs">Hellothe414 accidentally said Shit in the server that Affltered warned him.</text>
<text class="c" x="806" y="694" textLength="563" lengthAdjust="spacingAndGlyphs">Even though, they weren't counted on Appearances. Some of the inactive members in MSV</text>
<text class="c" x="806" y="709" textLength="569" lengthAdjust="spacingAndGlyphs">Server suddenly came in Above-Below Server like Half Corrupted Maisie Reborn, KeithOP and</text>
<text class="c" x="806" y="724" textLength="156" lengthAdjust="spacingAndGlyphs">Peashooting Angry Birds.</text>
<text class="c" x="806" y="754" textLength="512" lengthAdjust="spacingAndGlyphs">I have to agree to A Random Character that the server might go into a golden arc.</text>
<text class="c" x="806" y="769" textLength="493" lengthAdjust="spacingAndGlyphs">This is also the first real episode that one of Hellothe414's other friends appear.</text>

<!-- v scrollbar -->
<rect x="1420" y="196" width="19" height="614" fill="#e6e6e6"/>
<rect x="1422" y="212" width="15" height="585" fill="#dcdcdc"/>
<rect x="1422.500" y="198.500" width="14" height="14" fill="#fff" stroke="#c6c6c6"/><path d="M1426 207l3.500-4 3.500 4z" fill="#777"/>
<rect x="1422.500" y="685.500" width="14" height="68" fill="#fff" stroke="#c6c6c6"/>
<rect x="1422.500" y="797.500" width="14" height="13" fill="#fff" stroke="#c6c6c6"/><path d="M1426 802h7l-3.500 4z" fill="#777"/>

<!-- sheet tabs -->
<rect x="0" y="810" width="1439" height="28" fill="#e6e6e6"/>
<rect x="0" y="810" width="1419" height="1" fill="#aaa"/>
<rect x="0" y="838" width="1439" height="1" fill="#bdbdbd"/>
<path d="M31 820l-4 3.500 4 3.500zM56 820l4 3.500-4 3.500z" fill="#c6c6c6"/>
<g fill="#9a9a9a"><rect x="100" y="814" width="1" height="20"/><rect x="225" y="814" width="1" height="20"/><rect x="365" y="814" width="1" height="20"/><rect x="519" y="814" width="1" height="20"/><rect x="621" y="814" width="1" height="20"/><rect x="909" y="814" width="1" height="20"/><rect x="1025" y="814" width="1" height="20"/></g>
<rect x="723" y="810" width="79" height="24" fill="#fff"/><rect x="723" y="833" width="79" height="2" fill="#217346"/>
<g font-size="13" fill="#555">
<text x="115" y="828" textLength="95" lengthAdjust="spacingAndGlyphs">The Sheet Guide</text>
<text x="241" y="828" textLength="107" lengthAdjust="spacingAndGlyphs">People in the Intro</text>
<text x="382" y="828" textLength="121" lengthAdjust="spacingAndGlyphs">All Users With Debut</text>
<text x="533" y="828" textLength="74" lengthAdjust="spacingAndGlyphs">All Members</text>
<text x="634" y="828" textLength="76" lengthAdjust="spacingAndGlyphs">Appearances</text>
<text x="735" y="828" textLength="54" lengthAdjust="spacingAndGlyphs" font-weight="bold" fill="#217346">Episodes</text>
<text x="816" y="828" textLength="78" lengthAdjust="spacingAndGlyphs">Teleportation</text>
<text x="922" y="828" textLength="91" lengthAdjust="spacingAndGlyphs">Servers-Groups</text>
</g>
<circle cx="1067" cy="824" r="7.500" fill="none" stroke="#777" stroke-width="1.200"/><path d="M1063 824h8M1067 820v8" stroke="#777" stroke-width="1.500" fill="none"/>
<g fill="#bbb"><rect x="1279" y="819" width="2" height="2"/><rect x="1279" y="823" width="2" height="2"/><rect x="1279" y="827" width="2" height="2"/></g>
<rect x="1296" y="817" width="123" height="15" fill="#d8d8d8"/>
<rect x="1296.500" y="817.500" width="14" height="14" fill="#fff" stroke="#bbb"/><path d="M1306 820l-4 4.500 4 4.500z" fill="#666"/>
<rect x="1311" y="817" width="74" height="15" fill="#fff" stroke="#ddd"/>
<rect x="1404.500" y="817.500" width="14" height="14" fill="#fff" stroke="#bbb"/><path d="M1410 820l4 4.500-4 4.500z" fill="#666"/>

<!-- status bar -->
<rect x="0" y="839" width="1439" height="21" fill="#f1f1f1"/>
<text x="7" y="853" font-size="11.500" fill="#444" textLength="151" lengthAdjust="spacingAndGlyphs">Cell B149 commented by Mayi</text>
<rect x="1148" y="839" width="38" height="21" fill="#c6c6c6"/>
<g fill="none" stroke="#777"><rect x="1160.500" y="843.500" width="12" height="12"/><path d="M1160 847.500h13M1160 851.500h13M1164.500 843v13M1168.500 843v13"/>
<rect x="1198.500" y="843.500" width="12" height="12"/><path d="M1201 846.500h7M1201 849.500h7M1201 852.500h7"/>
<rect x="1236.500" y="843.500" width="13" height="11"/><path d="M1243 844v5h-3"/></g>
<rect x="1267" y="848" width="6" height="2" fill="#666"/>
<rect x="1277" y="848" width="100" height="1" fill="#999"/><rect x="1325" y="843" width="4" height="11" fill="#666"/>
<path d="M1381 849h8M1385 845v8" stroke="#666" stroke-width="2" fill="none"/>
<text x="1404" y="853" font-size="11.500" fill="#555" textLength="27" lengthAdjust="spacingAndGlyphs">100%</text>

<!-- taskbar -->
<rect x="0" y="860" width="1439" height="39" fill="#2f2729"/>
<rect x="197" y="860" width="48" height="39" fill="#56494b"/>
<path d="M16 873l7-1v7h-7zM24.500 872l7.500-1v8h-7.500zM16 880.500h7v7l-7-1zM24.500 880.500h7.500v8l-7.500-1z" fill="#fff"/>
<circle cx="75" cy="877" r="5" fill="none" stroke="#fff" stroke-width="1.300"/><path d="M71 881l-6 6" stroke="#fff" stroke-width="1.500" fill="none"/>
<circle cx="123" cy="880" r="12.500" fill="url(#edge)"/><path d="M112 882c1-7 8-8 12-6 4 2 4 6 2 7-4 0-8 1-8 5 0 1-4 0-6-6z" fill="#0c3f78"/>
<circle cx="172" cy="880" r="12" fill="#5865f2"/><path d="M165 876c4-2 10-2 14 0l2 8c-2 2-4 2-5 2l-1-2h-6l-1 2c-1 0-3 0-5-2z" fill="#fff"/>
<circle cx="178" cy="886" r="6.500" fill="#e04f4f"/><circle cx="178" cy="886" r="2.500" fill="#fff"/>
<rect x="210" y="871" width="14" height="18" fill="#1d6f42"/><rect x="222" y="873" width="9" height="14" fill="none" stroke="#fff" stroke-width="1"/><path d="M222 877.500h9M222 882.500h9M226.500 873v14" stroke="#fff" fill="none" stroke-width=".7"/>
<text x="212.500" y="885" font-size="12" font-weight="bold" fill="#fff">X</text>
<g fill="#76b9ed"><rect x="103" y="897" width="40" height="2"/><rect x="152" y="897" width="40" height="2"/><rect x="197" y="897" width="48" height="2"/></g>
<path d="M1258 884l5.500-5 5.500 5" stroke="#fff" stroke-width="1.300" fill="none"/>
<path d="M1280 878h3l4-3v11l-4-3h-3zM1290 878c1 2 1 3 0 5M1293 876c2 3 2 6 0 9" stroke="#fff" fill="none"/>
<rect x="1304.500" y="875.500" width="13" height="9" fill="none" stroke="#fff"/><rect x="1303" y="874" width="4" height="4" fill="#2f2729" stroke="#fff"/><path d="M1311 885v3M1307 888.500h8" stroke="#fff" fill="none"/>
<text x="1334" y="875" font-size="12" fill="#fff" textLength="42" lengthAdjust="spacingAndGlyphs">8:51 PM</text>
<text x="1327" y="893" font-size="12" fill="#fff" textLength="57" lengthAdjust="spacingAndGlyphs">12/11/2021</text>
<path d="M1399 872h16v11h-8l-3 3v-3h-5z" fill="#fff"/><path d="M1402 875h10M1402 878h10M1402 881h7" stroke="#2f2729" fill="none"/>
<circle cx="1414" cy="887" r="7.500" fill="#3a3234" stroke="#aaa"/><text x="1411" y="891" font-size="10" font-weight="bold" fill="#fff">1</text>
<rect x="1436" y="860" width="1" height="39" fill="#6a6264"/>
</svg>
</body></html>
